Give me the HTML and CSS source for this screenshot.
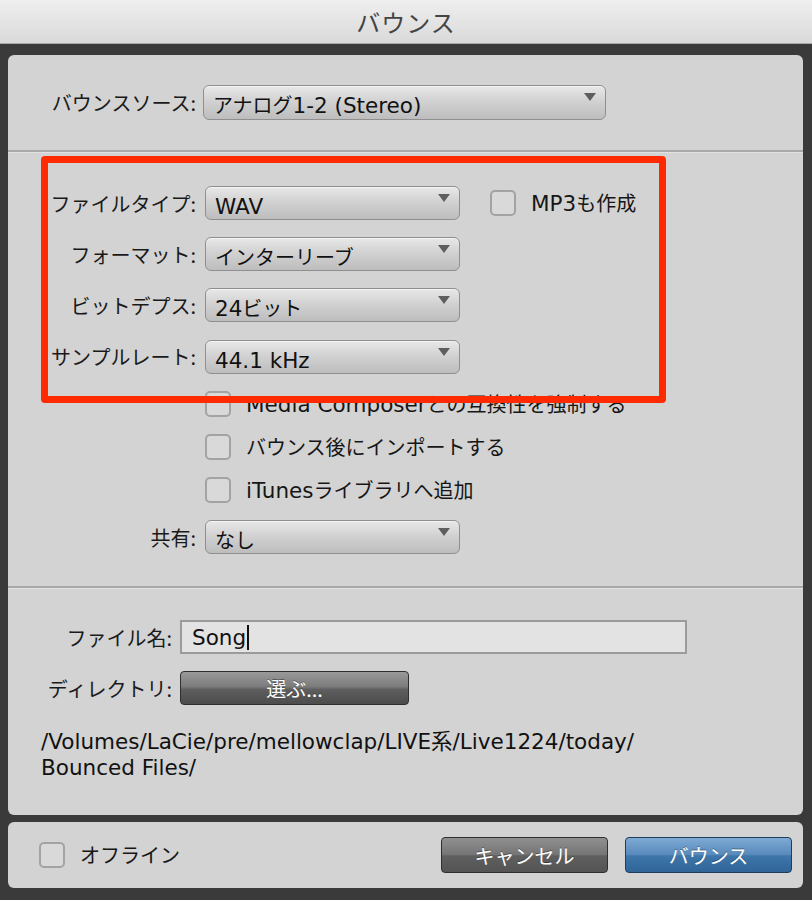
FILE: index.html
```html
<!DOCTYPE html>
<html lang="ja">
<head>
<meta charset="utf-8">
<title>バウンス</title>
<link rel="stylesheet" href="styles.css">
</head>
<body>
<div class="window">
  <div class="titlebar">バウンス</div>
  <div class="frame">
    <div class="panel main">
      <div class="section source">
        <span class="label">バウンスソース:</span>
        <div class="select wide">アナログ<span class="en">1-2 (Stereo)</span><span class="arrow"></span></div>
      </div>
      <div class="section format">
        <span class="label">ファイルタイプ:</span>
        <div class="select"><span class="en">WAV</span><span class="arrow"></span></div>
        <label class="check mp3"><span class="box"></span><span><span class="en">MP3</span>も作成</span></label>

        <span class="label">フォーマット:</span>
        <div class="select">インターリーブ<span class="arrow"></span></div>
        <span></span>

        <span class="label">ビットデプス:</span>
        <div class="select"><span class="en">24</span>ビット<span class="arrow"></span></div>
        <span></span>

        <span class="label">サンプルレート:</span>
        <div class="select"><span class="en">44.1 kHz</span><span class="arrow"></span></div>
        <span></span>

        <span></span>
        <label class="check span2"><span class="box"></span><span><span class="en">Media Composer</span>との互換性を強制する</span></label>

        <span></span>
        <label class="check span2"><span class="box"></span><span>バウンス後にインポートする</span></label>

        <span></span>
        <label class="check span2"><span class="box"></span><span><span class="en">iTunes</span>ライブラリへ追加</span></label>

        <span class="label">共有:</span>
        <div class="select">なし<span class="arrow"></span></div>
        <span></span>
      </div>
      <div class="section file">
        <div class="file-grid">
          <span class="label">ファイル名:</span>
          <div class="textfield"><span class="en">Song</span><span class="caret"></span></div>
          <span class="label">ディレクトリ:</span>
          <div class="button choose">選ぶ...</div>
        </div>
        <p class="path">/Volumes/LaCie/pre/mellowclap/LIVE系/Live1224/today/<br>Bounced Files/</p>
      </div>
      <div class="highlight"></div>
    </div>
    <div class="panel footer">
      <label class="check"><span class="box"></span><span>オフライン</span></label>
      <div class="buttons">
        <div class="button cancel">キャンセル</div>
        <div class="button primary">バウンス</div>
      </div>
    </div>
  </div>
</div>
</body>
</html>
```

FILE: styles.css
```css
* { box-sizing: border-box; }
html, body {
  margin: 0;
  padding: 0;
}
body {
  width: 812px;
  height: 900px;
  background: #3a3a3a;
  font-family: "DejaVu Sans", "Noto Sans CJK JP", sans-serif;
  color: #161616;
  overflow: hidden;
}
.window {
  display: flex;
  flex-direction: column;
  height: 900px;
}
.titlebar {
  height: 44px;
  background: linear-gradient(#efefef, #d9d9d9);
  border-bottom: 1px solid #a9a9a9;
  display: flex;
  align-items: center;
  justify-content: center;
  font-family: "Noto Sans CJK JP", sans-serif;
  font-size: 24px;
  color: #444;
  letter-spacing: 1px;
}
.frame {
  padding: 11px 9px 0 8px;
  display: flex;
  flex-direction: column;
  gap: 7px;
}
.panel {
  background: #d3d3d3;
  border-radius: 6px;
}
.main {
  position: relative;
  height: 760px;
  display: flex;
  flex-direction: column;
}
.en {
  font-family: "DejaVu Sans", sans-serif;
  font-size: 21.5px;
  line-height: 1;
}
.label {
  font-family: "Noto Sans CJK JP", sans-serif;
  font-size: 20px;
  text-align: right;
  white-space: nowrap;
  color: #1a1a1a;
}
.section {
  border-bottom: 2px solid #a8a8a8;
  box-shadow: 0 1px 0 #e2e2e2;
}
.source {
  height: 97px;
  padding-top: 30px;
  display: grid;
  grid-template-columns: 188px 403px;
  column-gap: 7px;
  align-items: start;
}
.source .label { line-height: 35px; }
.format {
  padding: 34px 0 32px;
  display: grid;
  grid-template-columns: 188px 255px auto;
  column-gap: 9px;
  row-gap: 17.2px;
  align-items: center;
}
.format > span:empty { height: 0; }
.select {
  position: relative;
  height: 34px;
  border: 1px solid #8f8f8f;
  border-radius: 6px;
  background: linear-gradient(#e8e8e8, #d2d2d2 45%, #bdbdbd);
  box-shadow: inset 0 1px 0 #f4f4f4;
  padding: 4px 0 0 9px;
  font-family: "Noto Sans CJK JP", sans-serif;
  font-size: 20px;
  line-height: 29px;
  color: #111;
  white-space: nowrap;
  overflow: hidden;
}
.select.wide { height: 35px; }
.arrow {
  position: absolute;
  right: 9px;
  top: 7px;
  width: 0;
  height: 0;
  border-left: 6px solid transparent;
  border-right: 6px solid transparent;
  border-top: 8px solid #5e5e5e;
}
.check {
  display: flex;
  align-items: center;
  gap: 15px;
  height: 26px;
  font-family: "Noto Sans CJK JP", sans-serif;
  font-size: 20px;
  line-height: 26px;
  white-space: nowrap;
  color: #161616;
}
.span2 { grid-column: 2 / 4; }
.mp3 { margin-left: 21px; }
.box {
  width: 26px;
  height: 26px;
  border: 2px solid #a3a3a3;
  border-radius: 5px;
  background: #d9d9d9;
  flex: none;
}
.file {
  border-bottom: none;
  box-shadow: none;
  padding: 32px 0 0 33px;
  flex: 1;
}
.file-grid {
  display: grid;
  grid-template-columns: 131px auto;
  column-gap: 8px;
  row-gap: 17px;
  align-items: center;
  justify-items: start;
  margin-left: -33px;
  padding-left: 33px;
}
.file-grid .label { justify-self: end; }
.textfield {
  width: 507px;
  height: 34px;
  border: 2px solid #9b9b9b;
  background: #e3e3e3;
  padding-left: 10px;
  color: #111;
  display: flex;
  align-items: center;
}
.caret {
  display: inline-block;
  width: 2px;
  height: 25px;
  background: #111;
  margin-left: 1px;
}
.button {
  height: 34px;
  border-radius: 4px;
  border: 1px solid #2f2f2f;
  color: #fff;
  font-family: "Noto Sans CJK JP", sans-serif;
  font-size: 20px;
  display: flex;
  align-items: center;
  justify-content: center;
  text-shadow: 0 -1px 0 rgba(0,0,0,0.35);
}
.choose {
  width: 229px;
  background: linear-gradient(#9a9a9a, #7c7c7c 45%, #5e5e5e 55%, #4c4c4c);
}
.path {
  margin: 24px 0 0;
  font-family: "DejaVu Sans", "Noto Sans CJK JP", sans-serif;
  font-size: 21.5px;
  line-height: 26px;
  color: #111;
}
.footer {
  height: 66px;
  display: flex;
  align-items: center;
  justify-content: space-between;
  padding: 0 11px 0 31px;
}
.buttons {
  display: flex;
  gap: 17px;
}
.buttons .button {
  width: 167px;
  height: 36px;
}
.cancel {
  background: linear-gradient(#909090, #747474 50%, #5f5f5f 52%, #545454);
}
.primary {
  border-color: #1e3c5c;
  background: linear-gradient(#7eaad4, #5789bb 50%, #3f76ab 52%, #2f6597);
}
.highlight {
  position: absolute;
  left: 33px;
  top: 101px;
  width: 625px;
  height: 247px;
  border: 7px solid #ff2a00;
  border-radius: 4px;
  pointer-events: none;
}
```
